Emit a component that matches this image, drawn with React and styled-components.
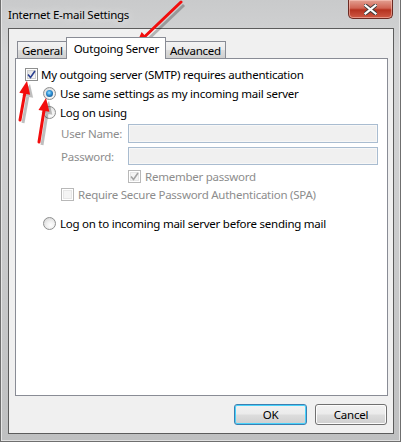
import styled, { createGlobalStyle } from "styled-components";

const Global = createGlobalStyle`
    html, body {
        margin: 0;
        padding: 0;
        background: #ffffff;
    }
    body {
        font-family: "Noto Sans", "Open Sans", sans-serif;
        font-size: 11.5px;
        letter-spacing: -0.25px;
        color: #000;
    }
`;

const Window = styled.div`
    position: relative;
    width: 401px;
    height: 442px;
    box-sizing: border-box;
    padding: 28px 6px 7px 7px;
    display: flex;
    flex-direction: column;
    background: linear-gradient(180deg, #c9cacb 0%, #d4d5d6 12%, #bfc0c1 100%);
    border-left: 1px solid #6f6f6f;
    border-right: 1px solid #6f6f6f;
    border-bottom: 1px solid #6f6f6f;
    box-shadow: inset 1px 0 0 #e6e6e6, inset -1px 0 0 #e6e6e6, inset 0 -1px 0 #e0e0e0;
    overflow: hidden;
`;

const TitleBar = styled.div`
    position: absolute;
    left: 0;
    top: 0;
    right: 0;
    height: 28px;
    display: flex;
    align-items: flex-start;
    justify-content: space-between;
`;

const Title = styled.div`
    margin: 6px 0 0 7px;
    font-size: 11.5px;
    line-height: 17px;
    color: #000;
    text-shadow: 0 0 8px rgba(255, 255, 255, 0.9);
`;

const CloseButton = styled.div`
    width: 45px;
    height: 19px;
    margin-right: 7px;
    box-sizing: border-box;
    border: 1px solid #6b2a22;
    border-top: none;
    border-radius: 0 0 5px 5px;
    background: linear-gradient(180deg, #e3a092 0%, #d06453 45%, #b5321f 55%, #cf5a45 100%);
    box-shadow: inset 0 0 0 1px rgba(255, 210, 200, 0.5);
    display: flex;
    align-items: center;
    justify-content: center;
    svg {
        display: block;
    }
`;

const Client = styled.div`
    flex: 1;
    background: #f0f0f0;
    border: 1px solid #5c5c5c;
    padding: 8px 6px 0 6px;
    display: flex;
    flex-direction: column;
`;

const TabStrip = styled.div`
    display: flex;
    align-items: flex-end;
    height: 22px;
    padding-left: 2px;
    position: relative;
    z-index: 1;
    margin-bottom: -1px;
`;

const Tab = styled.div`
    box-sizing: border-box;
    height: ${(p) => (p.$active ? "22px" : "18px")};
    padding: ${(p) => (p.$active ? "1px 6px 0 7px" : "0 4px")};
    margin: ${(p) => (p.$active ? "0 -1px 0 -2px" : "0")};
    border: 1px solid #898c95;
    border-bottom: ${(p) => (p.$active ? "none" : "1px solid #898c95")};
    background: ${(p) =>
        p.$active ? "#ffffff" : "linear-gradient(180deg, #f3f3f3 0%, #ebebeb 50%, #dddddd 51%, #cfcfcf 100%)"};
    font-size: 11.5px;
    line-height: ${(p) => (p.$active ? "19px" : "17px")};
    color: #000;
    position: relative;
    z-index: ${(p) => (p.$active ? 2 : 1)};
    white-space: nowrap;
`;

const Panel = styled.div`
    width: 373px;
    height: 338px;
    box-sizing: border-box;
    background: #ffffff;
    border: 1px solid #898c95;
    padding: 7px 0 0 9px;
    display: flex;
    flex-direction: column;
`;

const Row = styled.div`
    display: flex;
    align-items: center;
    height: 17px;
    margin-top: ${(p) => p.$mt || 0}px;
    padding-left: ${(p) => p.$indent || 0}px;
    color: ${(p) => (p.$disabled ? "#8d8d8d" : "#000")};
    white-space: nowrap;
`;

const Label = styled.span`
    margin-left: ${(p) => p.$gap || 4}px;
    line-height: 17px;
`;

const FieldRow = styled.div`
    display: flex;
    align-items: center;
    height: ${(p) => p.$h || 19}px;
    margin-top: ${(p) => p.$mt || 0}px;
    padding-left: 36px;
    color: #8d8d8d;
`;

const FieldLabel = styled.span`
    width: 67px;
    flex: none;
    line-height: 17px;
`;

const TextBox = styled.div`
    width: 250px;
    height: 100%;
    box-sizing: border-box;
    border: 1px solid #a9bcd0;
    background: #f0f0f0;
    box-shadow: inset 0 0 0 1px #f7f7f7;
`;

const Box = styled.span`
    width: 13px;
    height: 13px;
    flex: none;
    box-sizing: border-box;
    border: 1px solid ${(p) => (p.$disabled ? "#b8b8b8" : "#8e8f8f")};
    background: ${(p) =>
        p.$disabled ? "#f4f4f4" : "linear-gradient(135deg, #d6d6d6 0%, #f2f2f2 60%, #ffffff 100%)"};
    box-shadow: inset 0 0 0 1px #ffffff, inset 0 0 0 2px ${(p) => (p.$disabled ? "#e6e6e6" : "#d0d0d0")};
    display: flex;
    align-items: center;
    justify-content: center;
    svg {
        display: block;
    }
`;

const Radio = styled.span`
    width: 13px;
    height: 13px;
    flex: none;
    box-sizing: border-box;
    border-radius: 50%;
    border: 1px solid #8e8f8f;
    background: radial-gradient(circle at 60% 65%, #ffffff 0%, #f0f0f0 40%, #cfcfcf 100%);
    display: flex;
    align-items: center;
    justify-content: center;
    &::after {
        content: "";
        display: ${(p) => (p.$on ? "block" : "none")};
        width: 7px;
        height: 7px;
        border-radius: 50%;
        background: radial-gradient(circle at 45% 40%, #a9e4ff 0%, #3a9ee0 35%, #145c9a 75%, #0b3d6e 100%);
    }
`;

const ButtonRow = styled.div`
    display: flex;
    justify-content: flex-end;
    gap: 8px;
    padding: 8px 0 0 0;
    width: 372px;
`;

const Button = styled.div`
    width: ${(p) => (p.$default ? 73 : 72)}px;
    height: 21px;
    box-sizing: border-box;
    border: 1px solid ${(p) => (p.$default ? "#3c7fb1" : "#707070")};
    border-radius: 3px;
    background: linear-gradient(180deg, #f2f2f2 0%, #ebebeb 48%, #dddddd 52%, #cfcfcf 100%);
    box-shadow: inset 0 0 0 1px ${(p) => (p.$default ? "#48d2fb" : "#fcfcfc")};
    display: flex;
    align-items: center;
    justify-content: center;
    font-size: 11.5px;
    color: #000;
`;

const Overlay = styled.svg`
    position: absolute;
    left: 0;
    top: 0;
    width: 401px;
    height: 442px;
    pointer-events: none;
`;

function Check({ color }) {
    return (
        <svg width="9" height="9" viewBox="0 0 9 9">
            <path d="M1 4.5 L3.5 7.5 L8 1" fill="none" stroke={color} strokeWidth="1.6" />
        </svg>
    );
}

function Arrow({ x1, y1, x2, y2 }) {
    const ang = Math.atan2(y2 - y1, x2 - x1);
    const len = 13;
    const w = 5.5;
    const bx = x2 - len * Math.cos(ang);
    const by = y2 - len * Math.sin(ang);
    const px = -Math.sin(ang) * w;
    const py = Math.cos(ang) * w;
    const head = `${x2},${y2} ${bx + px},${by + py} ${bx - px},${by - py}`;
    const sx = 3;
    const sy = 3;
    const shadowHead = `${x2 + sx},${y2 + sy} ${bx + px + sx},${by + py + sy} ${bx - px + sx},${by - py + sy}`;
    return (
        <g>
            <g opacity="0.25">
                <line x1={x1 + sx} y1={y1 + sy} x2={bx + sx} y2={by + sy} stroke="#000" strokeWidth="3" />
                <polygon points={shadowHead} fill="#000" />
            </g>
            <line x1={x1} y1={y1} x2={bx} y2={by} stroke="#f20d0d" strokeWidth="3" strokeLinecap="round" />
            <polygon points={head} fill="#f20d0d" />
        </g>
    );
}

export default function App() {
    return (
        <>
            <Global />
            <Window>
                <TitleBar>
                    <Title>Internet E-mail Settings</Title>
                    <CloseButton>
                        <svg width="13" height="11" viewBox="0 0 13 11">
                            <path
                                d="M1.5 1.5 L11.5 9.5 M11.5 1.5 L1.5 9.5"
                                stroke="#3a3a3a"
                                strokeWidth="4"
                                strokeLinecap="square"
                            />
                            <path
                                d="M1.5 1.5 L11.5 9.5 M11.5 1.5 L1.5 9.5"
                                stroke="#ffffff"
                                strokeWidth="2.2"
                                strokeLinecap="square"
                            />
                        </svg>
                    </CloseButton>
                </TitleBar>
                <Client>
                    <TabStrip>
                        <Tab>General</Tab>
                        <Tab $active>Outgoing Server</Tab>
                        <Tab>Advanced</Tab>
                    </TabStrip>
                    <Panel>
                        <Row>
                            <Box>
                                <Check color="#2a3f8f" />
                            </Box>
                            <Label $gap={3}>My outgoing server (SMTP) requires authentication</Label>
                        </Row>
                        <Row $mt={2} $indent={18}>
                            <Radio $on />
                            <Label>Use same settings as my incoming mail server</Label>
                        </Row>
                        <Row $mt={2} $indent={18}>
                            <Radio />
                            <Label>Log on using</Label>
                        </Row>
                        <FieldRow $mt={3}>
                            <FieldLabel>User Name:</FieldLabel>
                            <TextBox />
                        </FieldRow>
                        <FieldRow $mt={4} $h={18}>
                            <FieldLabel>Password:</FieldLabel>
                            <TextBox />
                        </FieldRow>
                        <Row $mt={3} $indent={103} $disabled>
                            <Box $disabled>
                                <Check color="#a3a3a3" />
                            </Box>
                            <Label>Remember password</Label>
                        </Row>
                        <Row $mt={1} $indent={36} $disabled>
                            <Box $disabled />
                            <Label>Require Secure Password Authentication (SPA)</Label>
                        </Row>
                        <Row $mt={12} $indent={18}>
                            <Radio />
                            <Label>Log on to incoming mail server before sending mail</Label>
                        </Row>
                    </Panel>
                    <ButtonRow>
                        <Button $default>OK</Button>
                        <Button>Cancel</Button>
                    </ButtonRow>
                </Client>
                <Overlay viewBox="0 0 401 442">
                    <Arrow x1={180} y1={2} x2={135} y2={45} />
                    <Arrow x1={19} y1={120} x2={26} y2={81} />
                    <Arrow x1={38} y1={142} x2={45} y2={98} />
                </Overlay>
            </Window>
        </>
    );
}
